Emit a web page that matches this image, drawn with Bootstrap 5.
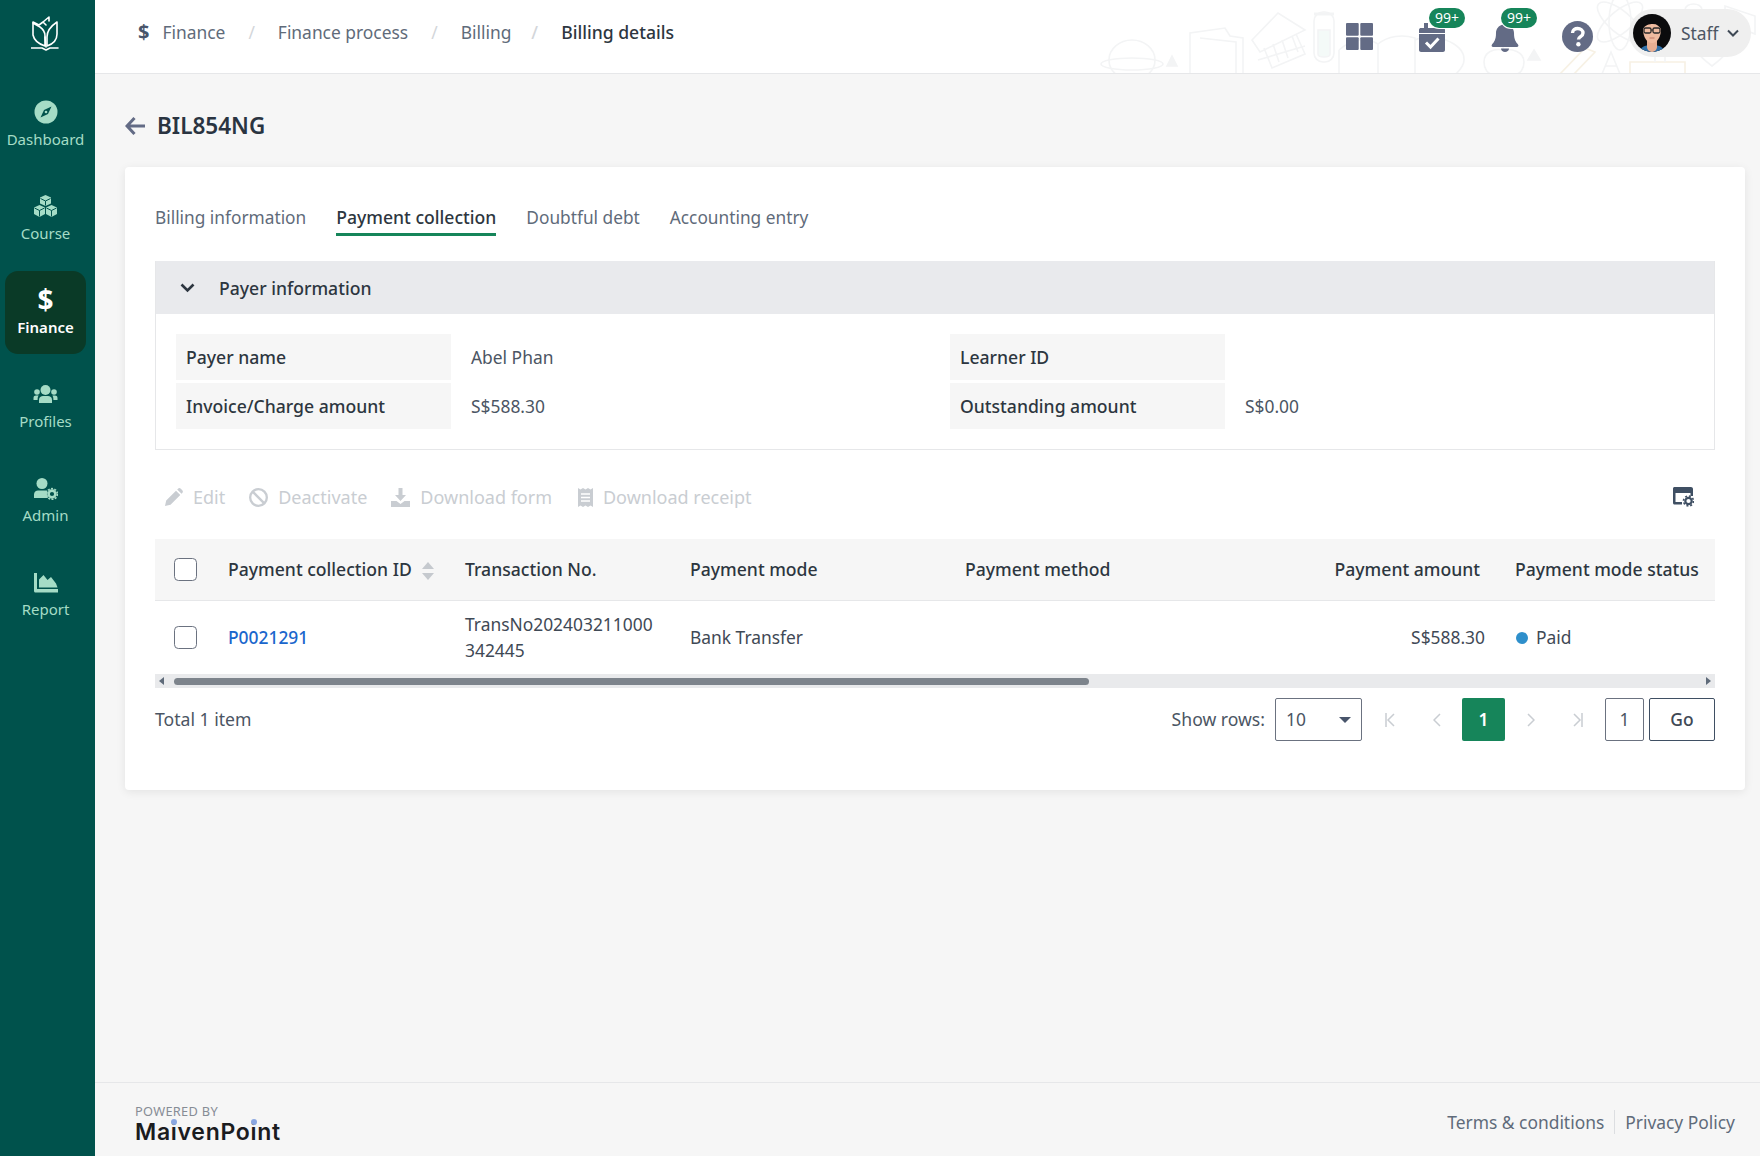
<!DOCTYPE html>
<html lang="en">
<head>
<meta charset="utf-8">
<title>Billing details</title>
<link rel="stylesheet" href="https://cdn.jsdelivr.net/npm/bootstrap@5.3.0/dist/css/bootstrap.min.css">
<style>
html,body{height:1156px;overflow:hidden}
body{font-family:"Noto Sans","Open Sans",sans-serif;font-size:17.4px;color:#2d3640;background:#f6f6f6}
.side-rail{width:95px;background:#00524c;height:1156px;flex:none}
.rail-logo{height:83px;padding:16px 4px 0 0}
.rail-items{gap:11px;padding:0 9px 0 5px}
.rail-item{height:83px;padding-top:14px;color:#a5dcc6;font-size:15px;border-radius:13px;line-height:20px;text-decoration:none;white-space:nowrap}
.rail-item.is-on{background:#0a3a27;color:#fff;font-weight:600}
.rail-ico{height:24px;margin-bottom:8px;font-size:25px;font-weight:700;line-height:24px}
.rail-item.is-on .rail-ico{font-size:28px;line-height:29px}
.top-strip{height:74px;background:#fff;border-bottom:1px solid #e6e7e9;padding-left:43px;overflow:hidden}
.doodles{position:absolute;right:0;top:0}
.crumb-nav{padding-bottom:8px}
.crumbs{margin:0;font-size:17.4px;--bs-breadcrumb-divider-color:#d3d6da;--bs-breadcrumb-item-padding-x:23px;--bs-breadcrumb-margin-bottom:0}
.crumbs a{color:#5f6b7a;text-decoration:none}
.crumbs .breadcrumb-item.active{color:#2d3640;font-weight:500;font-size:17.6px;padding-left:20px}
.crumb-dollar{font-weight:700;font-size:20px;color:#48556b;line-height:20px;margin-right:13px}
.top-tools{position:relative;z-index:1}
.tool-box{position:relative;display:flex;align-items:center;justify-content:center}
.tool-badge{position:absolute;top:8px;background:#16855a;color:#fff;font-size:14px;line-height:20px;height:20px;width:36px;text-align:center;border-radius:10px;box-shadow:0 0 0 1px #fff}
.staff-pill{width:122px;height:48px;background:#efefef;border-radius:24px;padding-left:4px;margin:0 9px 7px 36px;color:#4b5563}
.staff-name{margin-left:10px}
.content-wrap{padding:0 15px 0 30px;flex:1 1 auto}
.page-head{height:93px;gap:12px;padding-top:10px}
.page-title{font-size:22.5px;font-weight:600;margin:0;color:#2a3441}
.work-card{border:0;border-radius:4px;box-shadow:0 2px 10px rgba(0,0,0,.08);padding:33px 30px 49px;height:623px}
.tab-line{gap:30px;height:36px;font-size:17.3px}
.tab-line a{color:#5f6b7a;text-decoration:none;height:36px;line-height:35px;display:block}
.tab-line a.is-on{color:#2d3640;font-weight:500;font-size:17.6px;border-bottom:3px solid #16855a}
.payer-box{margin-top:25px;border:1px solid #e6e7e9;border-top:0}
.payer-head{height:53px;background:#e9eaed;padding-left:24px;gap:24px;font-size:17.6px;font-weight:500;padding-top:1px}
.payer-grid{display:grid;grid-template-columns:275px 499px 275px 1fr;grid-auto-rows:46px;row-gap:3px;padding:20px;font-size:17.4px}
.pay-label{background:#f6f6f6;padding-left:10px;font-weight:500;font-size:17.6px;display:flex;align-items:center}
.pay-value{padding-left:20px;color:#4b5563;display:flex;align-items:center}
.tool-row{height:89px;padding:5px 21px 0 10px;font-size:18px;color:#c9cdd2}
.tool-btns{gap:24px}
.tool-btn{gap:10px}
.pay-table{--bs-table-bg:transparent;width:1560px;margin:0;table-layout:fixed;font-size:17.4px}
.pay-table th{background:#f6f6f6;height:61px;vertical-align:middle;font-weight:500;font-size:17.6px;border-bottom:1px solid #e6e7e9;padding:0 12px;white-space:nowrap;color:#2d3640}
.pay-table td{height:74px;vertical-align:middle;border:0;padding:0 12px;line-height:26px;color:#3f4955}
.pay-table a{color:#1a66cc;text-decoration:none;font-weight:500}
.cell-check{width:23px;height:23px;margin:0 0 2px 7px;border:1px solid #6b7280;border-radius:3px;vertical-align:middle}
.pay-table th.cell-amt{text-align:right;padding-right:12px}
.pay-table td.cell-amt{text-align:right;padding-right:7px}
.pay-table .cell-status{padding-left:23px}
.status-dot{width:12px;height:12px;border-radius:50%;background:#2e8fcb;display:inline-block;margin:0 8px 0 1px}
.sort-arrows{margin-left:10px;vertical-align:-4px}
.scroll-track{height:14px;background:#e9eaec;padding:0 4px}
.scroll-thumb{height:7px;width:915px;background:#7d848c;border-radius:4px;margin-left:10px}
.tri-end{width:0;height:0;border-top:4px solid transparent;border-bottom:4px solid transparent}
.pager-row{margin-top:10px;height:43px}
.total-txt,.show-txt{color:#4b5563;font-size:17.6px}
.rows-pick{width:87px;height:43px;border:1px solid #6b7280;border-radius:2px;padding:0 10px;margin-left:10px;color:#4b5563}
.caret-down{width:0;height:0;border-left:6px solid transparent;border-right:6px solid transparent;border-top:6px solid #48556b}
.page-step{width:47px;text-align:center;color:#c9cdd2;line-height:0}
.page-now{width:43px;height:43px;background:#16855a;color:#fff;border-radius:2px;font-weight:600;margin:0 2px}
.page-box{width:39px;height:43px;border:1px solid #6b7280;border-radius:2px;color:#4b5563;margin-left:4px}
.go-btn{width:66px;height:43px;border:1px solid #3f4f63;border-radius:2px;color:#3f4955;font-weight:500;margin-left:5px;padding:0;font-size:17.4px;background:#fff}
.foot-bar{height:74px;border-top:1px solid #e6e7e9;padding:0 25px 0 40px}
.brand-block{padding-top:10px}
.brand-small{font-size:12.8px;color:#868c95;line-height:15px;letter-spacing:.3px}
.brand-big{font-family:Inter,sans-serif;font-weight:600;font-size:23px;line-height:26px;color:#1b1c1f;white-space:nowrap;letter-spacing:.7px}
.brand-i{position:relative}
.brand-i::after{content:"";position:absolute;left:50%;top:1px;width:6px;height:6px;margin-left:-3px;border-radius:50%;background:#8aa6e0}
.foot-links{color:#5f6b7a;padding-top:6px}
.foot-links a{color:#5f6b7a;text-decoration:none}
.foot-sep{width:1px;height:24px;background:#dcdee1;margin:0 10px}
</style>
</head>
<body>
<div class="d-flex">
<aside class="side-rail d-flex flex-column">
  <div class="rail-logo d-flex justify-content-center">
    <svg width="30" height="36" viewBox="0 0 30 36" fill="none" stroke="#fff" stroke-width="1.6" stroke-linejoin="round" stroke-linecap="round"><path d="M14 30C8 28 3 24 2 19V7L9 11C12 13 14 16 14 20Z"/><path d="M2 7V6L8 9L12 6L15 9M12 6L18 1V5"/><path d="M16 30V21C16 14 20 10 26 6V18C26 24 22 28 16 30Z"/><path d="M14 21L15 31"/><path d="M0 32H11L15 34L19 32H27"/></svg>
  </div>
  <nav class="rail-items d-flex flex-column">
    <a class="rail-item d-flex flex-column align-items-center" href="#">
      <span class="rail-ico"><svg width="24" height="24" viewBox="0 0 24 24"><circle cx="12" cy="12" r="11.5" fill="#a5dcc6"/><path d="M17.5 6.5L14 14L6.5 17.5L10 10Z" fill="#00524c"/><circle cx="12" cy="12" r="1.3" fill="#a5dcc6"/></svg></span>Dashboard</a>
    <a class="rail-item d-flex flex-column align-items-center" href="#">
      <span class="rail-ico"><svg width="25" height="24" viewBox="0 0 25 24" fill="#a5dcc6"><path d="M12.5 1L18 3.5V9.5L12.5 12L7 9.5V3.5Z"/><path d="M6.5 11L12 13.5V20L6.5 23L1 20V13.5Z"/><path d="M18.5 11L24 13.5V20L18.5 23L13 20V13.5Z"/><path d="M7.5 4.5L12.5 7L17.5 4.5M12.5 7V11.5M1.5 14L6.5 16.5L11.5 14M6.5 16.5V22.5M13.5 14L18.5 16.5L23.5 14M18.5 16.5V22.5" stroke="#00524c" stroke-width="1" fill="none"/></svg></span>Course</a>
    <a class="rail-item is-on d-flex flex-column align-items-center" href="#">
      <span class="rail-ico">$</span>Finance</a>
    <a class="rail-item d-flex flex-column align-items-center" href="#">
      <span class="rail-ico"><svg width="25" height="24" viewBox="0 0 25 24" fill="#a5dcc6"><circle cx="12.5" cy="8" r="5"/><circle cx="4" cy="10" r="2.8"/><circle cx="21" cy="10" r="2.8"/><path d="M6 21V18C6 15 8 14 10 14H15C17 14 19 15 19 18V21Z"/><path d="M0.5 18V16C0.5 14.2 1.8 13.5 3 13.5H5.6C5 14.5 4.6 15.6 4.6 17V18Z"/><path d="M24.5 18V16C24.5 14.2 23.2 13.5 22 13.5H19.4C20 14.5 20.4 15.6 20.4 17V18Z"/></svg></span>Profiles</a>
    <a class="rail-item d-flex flex-column align-items-center" href="#">
      <span class="rail-ico"><svg width="25" height="24" viewBox="0 0 25 24" fill="#a5dcc6"><circle cx="9" cy="7.5" r="5.5"/><path d="M1 22V18.5C1 16 3 14.5 5 14.5H13C13.5 14.5 14 14.6 14.4 14.8C13.6 17.2 13.8 20 15 22Z"/><circle cx="19" cy="18" r="3.4" fill="none" stroke="#a5dcc6" stroke-width="2.6"/><circle cx="19" cy="18" r="5.4" fill="none" stroke="#a5dcc6" stroke-width="1.6" stroke-dasharray="2 1.4"/></svg></span>Admin</a>
    <a class="rail-item d-flex flex-column align-items-center" href="#">
      <span class="rail-ico"><svg width="24" height="24" viewBox="0 0 24 24" fill="#a5dcc6"><path d="M0 3H3V19H24V22.5H1.5C.6 22.5 0 21.9 0 21Z"/><path d="M5 17.5V9.5L9.5 5L13.5 10L17 7L22 13.5L23.5 17.5Z"/></svg></span>Report</a>
  </nav>
</aside>
<div class="d-flex flex-column flex-grow-1" style="height:1156px">
  <header class="top-strip position-relative d-flex align-items-center justify-content-between">
    <svg class="doodles" width="700" height="74" viewBox="0 0 700 74" fill="none" stroke="#f3f4f5" stroke-width="1.6">
      <ellipse cx="72" cy="60" rx="23" ry="20"/><ellipse cx="72" cy="64" rx="31" ry="6"/>
      <path d="M112 56L117 66H107Z" fill="#f3f4f5"/>
      <path d="M130 74V33L165 28L170 36L183 38V74M140 38L176 42V74"/>
      <path d="M192 40L218 13L245 30L200 52ZM204 48L212 68L245 54L236 34M213 44L219 62M222 40L228 58M232 36L238 52M198 60L245 46"/>
      <rect x="254" y="12" width="20" height="50" rx="9"/><path d="M254 14H274" stroke-width="3"/><path d="M258 30H270V54C270 58 258 58 258 54Z" fill="#f4faf8"/>
      <path d="M279 50C295 36 308 38 318 44C328 36 342 34 355 38V74M279 50V74M318 44V74"/>
      <path d="M355 40C372 32 405 42 404 60C404 66 398 72 396 74"/>
      <path d="M424 62C424 52 434 48 443 50C452 48 464 52 464 62C464 69 460 74 456 74H432C428 74 424 69 424 62ZM443 42V50"/>
      <path d="M474 50L480 60H468Z" fill="#f3f4f5"/>
      <path d="M500 74L525 48L535 52L514 74" stroke="#f7f1e4"/>
      <path d="M542 74L551 52L560 74M545 66H557" />
      <ellipse cx="560" cy="22" rx="28" ry="11" transform="rotate(40 560 22)"/><ellipse cx="560" cy="22" rx="28" ry="11" transform="rotate(-40 560 22)"/><ellipse cx="560" cy="22" rx="11" ry="28"/>
      <path d="M570 74V62H625V74" stroke="#f7f1e4"/><path d="M595 62V40C588 36 590 24 600 24C610 24 612 36 605 40V62"/>
      <path d="M625 10C625 2 642 2 642 10S634 16 634 24"/>
      <path d="M634 44C634 37 646 36 652 45C658 36 670 37 670 44C670 52 660 60 652 66C644 60 634 52 634 44Z"/>
      <path d="M665 6L695 16V34L665 22Z"/>
    </svg>
    <nav class="crumb-nav d-flex align-items-center position-relative">
      <span class="crumb-dollar">$</span>
      <ol class="breadcrumb crumbs">
        <li class="breadcrumb-item"><a href="#">Finance</a></li>
        <li class="breadcrumb-item"><a href="#">Finance process</a></li>
        <li class="breadcrumb-item"><a href="#">Billing</a></li>
        <li class="breadcrumb-item active">Billing details</li>
      </ol>
    </nav>
    <div class="top-tools d-flex align-items-center">
      <div class="tool-box" style="width:27px;margin-right:46px">
        <svg width="27" height="27" viewBox="0 0 27 27" fill="#636b85"><rect width="12.7" height="12.7" rx="1"/><rect x="14.3" width="12.7" height="12.7" rx="1"/><rect y="14.3" width="12.7" height="12.7" rx="1"/><rect x="14.3" y="14.3" width="12.7" height="12.7" rx="1"/></svg>
      </div>
      <div class="tool-box" style="width:26px;margin-right:46px;height:74px">
        <svg width="26" height="30" viewBox="0 0 26 30" fill="#636b85"><path d="M0 8C0 6.5 1 6 2 6H5V1H9V6H17V1H21V6H24C25 6 26 6.5 26 8V11H0ZM0 12H26V28C26 29 25 30 24 30H2C1 30 0 29 0 28Z"/><path d="M7 20.5L11.5 25L19.5 16.5" fill="none" stroke="#fff" stroke-width="3"/></svg>
        <span class="tool-badge" style="left:10px">99+</span>
      </div>
      <div class="tool-box" style="width:28px;margin-right:43px;height:74px">
        <svg width="28" height="30" viewBox="0 0 28 30" fill="#636b85"><path d="M14 0C15.5 0 16 1 16 2.5C20.5 3.5 23 7 23 11C23 18 25 20 27 22.5C28 24 27 25 26 25H2C1 25 0 24 1 22.5C3 20 5 18 5 11C5 7 7.5 3.5 12 2.5C12 1 12.5 0 14 0Z"/><path d="M10 26.5H18C18 28.5 16 30 14 30S10 28.5 10 26.5Z"/></svg>
        <span class="tool-badge" style="left:10px">99+</span>
      </div>
      <div class="tool-box" style="width:31px">
        <svg width="31" height="31" viewBox="0 0 31 31"><circle cx="15.5" cy="15.5" r="15.5" fill="#636b85"/><path d="M10.5 12C10.5 9 13 7.5 15.7 7.5C18.5 7.5 21 9.3 21 12C21 15.8 16.5 15.5 16.5 18.5" fill="none" stroke="#fff" stroke-width="3.4"/><circle cx="16.4" cy="23.3" r="2.2" fill="#fff"/></svg>
      </div>
      <div class="staff-pill d-flex align-items-center">
        <svg width="38" height="38" viewBox="0 0 38 38"><defs><clipPath id="avaClip"><circle cx="19" cy="19" r="19"/></clipPath></defs><g clip-path="url(#avaClip)"><rect width="38" height="38" fill="#0b0b0d"/><path d="M6 38C8 32 13 31 19 31S30 32 32 38Z" fill="#2f6fa8"/><path d="M14 26H24V33C24 36 21 38 19 38S14 36 14 33Z" fill="#e6ae93"/><path d="M10 15C10 9 14 6 19 6S28 9 28 15C28 23 24 29 19 29S10 23 10 15Z" fill="#efbba0"/><path d="M10 15C12 11 16 10 20 10C24 10 26 12 28 15V5H10Z" fill="#0b0b0d"/><rect x="11" y="14" width="7" height="5" rx="1.5" fill="none" stroke="#2a2a2a" stroke-width="1.3"/><rect x="20" y="14" width="7" height="5" rx="1.5" fill="none" stroke="#2a2a2a" stroke-width="1.3"/><path d="M18 16H20" stroke="#2a2a2a" stroke-width="1.2"/><path d="M16.5 24H21.5" stroke="#c17a66" stroke-width="1.2"/></g></svg>
        <span class="staff-name">Staff</span>
        <svg class="ms-2" width="12" height="8" viewBox="0 0 12 8" fill="none" stroke="#3f4955" stroke-width="2"><path d="M1 1.5L6 6.5L11 1.5"/></svg>
      </div>
    </div>
  </header>

  <main class="content-wrap">
    <div class="page-head d-flex align-items-center">
      <svg width="20" height="20" viewBox="0 0 20 20" fill="none" stroke="#636b85" stroke-width="3"><path d="M9.5 2L2 10L9.5 18M3 10H20"/></svg>
      <h1 class="page-title">BIL854NG</h1>
    </div>
    <div class="card work-card">
      <div class="tab-line d-flex">
        <a href="#">Billing information</a>
        <a href="#" class="is-on">Payment collection</a>
        <a href="#">Doubtful debt</a>
        <a href="#">Accounting entry</a>
      </div>
      <section class="payer-box">
        <div class="payer-head d-flex align-items-center">
          <svg width="15" height="10" viewBox="0 0 15 10" fill="none" stroke="#2d3640" stroke-width="2.6"><path d="M1.5 1.5L7.5 7.5L13.5 1.5"/></svg>
          <span>Payer information</span>
        </div>
        <div class="payer-grid">
          <div class="pay-label">Payer name</div><div class="pay-value">Abel Phan</div>
          <div class="pay-label">Learner ID</div><div class="pay-value"></div>
          <div class="pay-label">Invoice/Charge amount</div><div class="pay-value">S$588.30</div>
          <div class="pay-label">Outstanding amount</div><div class="pay-value">S$0.00</div>
        </div>
      </section>
      <div class="tool-row d-flex align-items-center justify-content-between">
        <div class="tool-btns d-flex">
          <span class="tool-btn d-flex align-items-center"><svg width="18" height="18" viewBox="0 0 18 18" fill="#c9cdd2"><path d="M0 18L1.2 12.5L11 2.7L15.3 7L5.5 16.8ZM12.2 1.5L13 .7C13.8-.1 15-.1 15.8 .7L17.3 2.2C18.1 3 18.1 4.2 17.3 5L16.5 5.8Z"/></svg>Edit</span>
          <span class="tool-btn d-flex align-items-center"><svg width="19" height="19" viewBox="0 0 18 18" fill="none" stroke="#c9cdd2" stroke-width="2.2"><circle cx="9" cy="9" r="7.9"/><path d="M3.5 3.5L14.5 14.5"/></svg>Deactivate</span>
          <span class="tool-btn d-flex align-items-center"><svg width="19" height="19" viewBox="0 0 19 19" fill="#c9cdd2"><path d="M7.5 0H11.5V7H15L9.5 13L4 7H7.5Z"/><path d="M0 13H5.5L9.5 16L13.5 13H19V19H0Z"/></svg>Download form</span>
          <span class="tool-btn d-flex align-items-center" style="margin-left:2px"><svg width="15" height="19" viewBox="0 0 15 19" fill="#c9cdd2"><path d="M0 0L2.5 1.5L5 0L7.5 1.5L10 0L12.5 1.5L15 0V19L12.5 17.5L10 19L7.5 17.5L5 19L2.5 17.5L0 19Z"/><path d="M3 6H12M3 9.5H12M3 13H12" stroke="#fff" stroke-width="1.4"/></svg>Download receipt</span>
        </div>
        <svg width="21" height="20" viewBox="0 0 21 20"><path d="M1.5 0H18C19 0 20 .8 20 2V9H17.5V6H2.5V15H9V17.5H1.5C.7 17.5 0 16.8 0 16V1.5C0 .7 .7 0 1.5 0Z" fill="#3f4f63"/><circle cx="15.5" cy="14" r="3.2" fill="none" stroke="#3f4f63" stroke-width="2.2"/><circle cx="15.5" cy="14" r="5" fill="none" stroke="#3f4f63" stroke-width="1.6" stroke-dasharray="2 1.9"/></svg>
      </div>
      <div>
        <table class="table pay-table">
          <colgroup><col style="width:61px"><col style="width:237px"><col style="width:225px"><col style="width:275px"><col style="width:177px"><col style="width:362px"><col style="width:223px"></colgroup>
          <thead><tr>
            <th><input type="checkbox" class="cell-check form-check-input" aria-label="All"></th>
            <th>Payment collection ID<svg class="sort-arrows" width="12" height="18" viewBox="0 0 12 18" fill="#c5c9ce"><path d="M6 0L12 7H0Z"/><path d="M0 11H12L6 18Z"/></svg></th>
            <th>Transaction No.</th>
            <th>Payment mode</th>
            <th>Payment method</th>
            <th class="cell-amt">Payment amount</th>
            <th class="cell-status">Payment mode status</th>
          </tr></thead>
          <tbody><tr>
            <td><input type="checkbox" class="cell-check form-check-input" aria-label="Row"></td>
            <td><a href="#">P0021291</a></td>
            <td>TransNo202403211000<br>342445</td>
            <td>Bank Transfer</td>
            <td></td>
            <td class="cell-amt">S$588.30</td>
            <td class="cell-status"><span class="status-dot"></span>Paid</td>
          </tr></tbody>
        </table>
      </div>
      <div class="scroll-track d-flex align-items-center">
        <span class="tri-end" style="border-right:5px solid #5f6b7a"></span>
        <div class="scroll-thumb"></div>
        <span class="tri-end ms-auto" style="border-left:5px solid #5f6b7a"></span>
      </div>
      <div class="pager-row d-flex align-items-center justify-content-between">
        <span class="total-txt">Total 1 item</span>
        <div class="d-flex align-items-center">
          <span class="show-txt">Show rows:</span>
          <div class="rows-pick d-flex align-items-center justify-content-between"><span>10</span><span class="caret-down"></span></div>
          <span class="page-step ms-1"><svg width="10" height="14" viewBox="0 0 10 14" fill="none" stroke="#c9cdd2" stroke-width="1.5"><path d="M1 0V14M9 1L3 7L9 13"/></svg></span>
          <span class="page-step"><svg width="8" height="14" viewBox="0 0 8 14" fill="none" stroke="#c9cdd2" stroke-width="1.5"><path d="M7 1L1 7L7 13"/></svg></span>
          <span class="page-now d-flex align-items-center justify-content-center">1</span>
          <span class="page-step"><svg width="8" height="14" viewBox="0 0 8 14" fill="none" stroke="#c9cdd2" stroke-width="1.5"><path d="M1 1L7 7L1 13"/></svg></span>
          <span class="page-step"><svg width="10" height="14" viewBox="0 0 10 14" fill="none" stroke="#c9cdd2" stroke-width="1.5"><path d="M9 0V14M1 1L7 7L1 13"/></svg></span>
          <span class="page-box d-flex align-items-center justify-content-center">1</span>
          <button type="button" class="btn go-btn">Go</button>
        </div>
      </div>
    </div>
  </main>

  <footer class="foot-bar d-flex align-items-center justify-content-between">
    <div class="brand-block">
      <div class="brand-small">POWERED BY</div>
      <div class="brand-big">Ma<span class="brand-i">i</span>venPo<span class="brand-i">i</span>nt</div>
    </div>
    <div class="foot-links d-flex align-items-center"><a href="#">Terms &amp; conditions</a><span class="foot-sep"></span><a href="#">Privacy Policy</a></div>
  </footer>
</div>
</div>
<script src="https://cdn.jsdelivr.net/npm/bootstrap@5.3.0/dist/js/bootstrap.bundle.min.js"></script>
</body>
</html>
